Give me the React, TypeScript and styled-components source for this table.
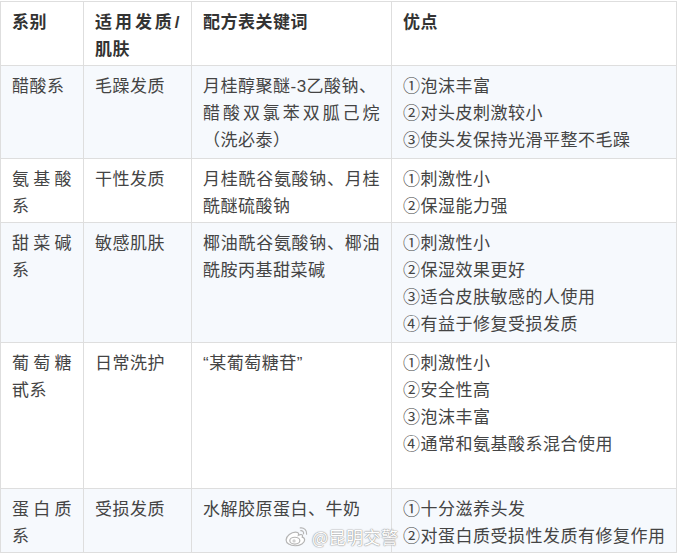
import React, { FC } from 'react';
import styled, { createGlobalStyle } from 'styled-components';

const GlobalStyle = createGlobalStyle`
  html, body {
    margin: 0;
    padding: 0;
    background: #fff;
  }
  body {
    font-family: "Liberation Sans", "Noto Sans CJK SC", sans-serif;
  }
`;

const Page = styled.div`
  position: relative;
  width: 680px;
  height: 556px;
  padding-top: 1px;
  box-sizing: border-box;
  overflow: hidden;
`;

const Table = styled.div`
  display: grid;
  grid-template-columns: 83px 108px 200px 285px;
  grid-template-rows: 64px 93px 64px 120px 146px 64px;
  width: 677px;
  box-sizing: border-box;
  border-top: 1px solid #dedede;
  border-left: 1px solid #dedede;
`;

const Cell = styled.div<{ $shade?: boolean; $head?: boolean }>`
  box-sizing: border-box;
  padding: 7px 11px 0;
  border-right: 1px solid #dedede;
  border-bottom: 1px solid #dedede;
  background: ${p => (p.$shade ? '#f6f9fd' : '#fff')};
  color: ${p => (p.$head ? '#333' : '#444')};
  font-weight: ${p => (p.$head ? 700 : 400)};
  font-size: 17px;
  letter-spacing: 0.5px;
  line-height: 27px;
`;

const Line = styled.div`
  white-space: nowrap;
`;

// evenly spread line, like the justified cells of the original table
const SpreadLine = styled.div`
  display: flex;
  justify-content: space-between;
  white-space: nowrap;
`;

const Watermark = styled.div`
  position: absolute;
  left: 285px;
  top: 526px;
  display: flex;
  align-items: center;
  gap: 3px;
  pointer-events: none;
`;

const MarkText = styled.span`
  font-family: "Noto Sans CJK SC", sans-serif;
  font-size: 17px;
  line-height: 20px;
  letter-spacing: 0.5px;
  color: #fff;
  text-shadow: 0 0 1px #999, 0 0 1px #999, 0 0 2px #bbb;
`;

type Ln = { text: string; spread?: boolean };
const s = (text: string): Ln => ({ text, spread: true });

const rows: (Ln | string)[][][] = [
  [['系别'], [s('适用发质/'), '肌肤'], ['配方表关键词'], ['优点']],
  [
    ['醋酸系'],
    ['毛躁发质'],
    ['月桂醇聚醚-3乙酸钠、', s('醋酸双氯苯双胍己烷'), '（洗必泰）'],
    ['①泡沫丰富', '②对头皮刺激较小', '③使头发保持光滑平整不毛躁'],
  ],
  [
    [s('氨基酸'), '系'],
    ['干性发质'],
    [s('月桂酰谷氨酸钠、月桂'), '酰醚硫酸钠'],
    ['①刺激性小', '②保湿能力强'],
  ],
  [
    [s('甜菜碱'), '系'],
    ['敏感肌肤'],
    [s('椰油酰谷氨酸钠、椰油'), '酰胺丙基甜菜碱'],
    ['①刺激性小', '②保湿效果更好', '③适合皮肤敏感的人使用', '④有益于修复受损发质'],
  ],
  [
    [s('葡萄糖'), '甙系'],
    ['日常洗护'],
    ['“某葡萄糖苷”'],
    ['①刺激性小', '②安全性高', '③泡沫丰富', '④通常和氨基酸系混合使用'],
  ],
  [
    [s('蛋白质'), '系'],
    ['受损发质'],
    ['水解胶原蛋白、牛奶'],
    ['①十分滋养头发', '②对蛋白质受损性发质有修复作用'],
  ],
];

const WeiboLogo: FC = () => (
  <svg width="24" height="21" viewBox="0 0 22 19">
    <g fill="#fff" stroke="#b5b5b5" strokeWidth="1.1">
      <path d="M9.5 5.5c-3.5 0-8.5 3.6-8.5 7.2C1 15.6 4.6 18 9.3 18c4.9 0 8.7-2.6 8.7-5.3 0-1.5-1.1-2.3-2.2-2.6.5-1.3.4-2.6-1.5-2.4-1 .1-2 .6-2 .6s.6-1.8-.7-2.5c-.6-.3-1.3-.3-2.1-.3z" />
      <ellipse cx="9" cy="13.3" rx="4.6" ry="3.1" />
      <circle cx="8.3" cy="13.6" r="1.5" fill="#d0d0d0" stroke="none" />
      <path d="M14 1.6c3.3-.6 6.4 2.3 5.8 5.8" fill="none" strokeLinecap="round" />
      <path d="M14.3 4.2c1.6-.3 3.1 1.1 2.7 2.8" fill="none" strokeLinecap="round" />
    </g>
  </svg>
);

const App: FC = () => {
  return (
    <Page>
      <GlobalStyle />
      <Table>
        {rows.map((row, r) =>
          row.map((cell, c) => (
            <Cell key={`${r}-${c}`} $head={r === 0} $shade={r % 2 === 1}>
              {cell.map((ln, i) => {
                const line = typeof ln === 'string' ? { text: ln } : ln;
                return line.spread ? (
                  <SpreadLine key={i}>
                    {Array.from(line.text).map((ch, k) => (
                      <span key={k}>{ch}</span>
                    ))}
                  </SpreadLine>
                ) : (
                  <Line key={i}>{line.text}</Line>
                );
              })}
            </Cell>
          ))
        )}
      </Table>
      <Watermark>
        <WeiboLogo />
        <MarkText>@昆明交警</MarkText>
      </Watermark>
    </Page>
  );
};

export default App;
